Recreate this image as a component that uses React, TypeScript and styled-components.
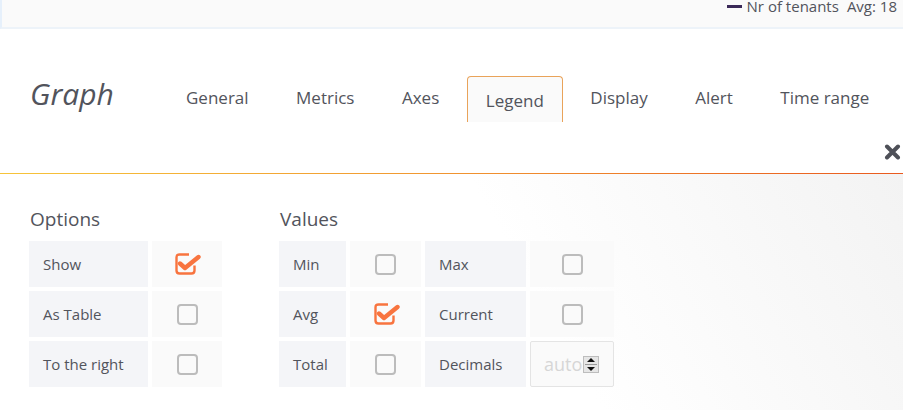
import React from "react";
import styled, { createGlobalStyle } from "styled-components";

const GlobalStyle = createGlobalStyle`
  html, body { margin: 0; padding: 0; background: #ffffff; }
  body { font-family: "Open Sans", "Noto Sans", sans-serif; color: #52545c; }
  * { box-sizing: border-box; }
`;

const Page = styled.div`
  width: 903px;
  height: 410px;
  overflow: hidden;
  display: flex;
  flex-direction: column;
`;

const PanelStrip = styled.div`
  height: 29px;
  flex: none;
  background: #fafafa;
  border-left: 2px solid #e6f0fb;
  border-bottom: 2px solid #edf3f9;
  display: flex;
  justify-content: flex-end;
  align-items: flex-start;
  padding-right: 6px;
`;

const LegendItem = styled.div`
  display: flex;
  align-items: center;
  font-size: 15px;
  line-height: 15px;
  margin-top: -1px;
  color: #52545c;
`;

const Swatch = styled.span`
  width: 15px;
  height: 3px;
  background: #3b2a58;
  display: inline-block;
  margin-right: 5px;
`;

const LegendValue = styled.span`
  margin-left: 8px;
`;

const Header = styled.div`
  flex: none;
  display: flex;
  flex-direction: column;
`;

const TitleRow = styled.div`
  display: flex;
  align-items: flex-start;
  padding-top: 47px;
  padding-left: 30px;
`;

const Title = styled.h2`
  margin: 0;
  width: 136px;
  font-size: 30px;
  line-height: 36px;
  font-style: italic;
  font-weight: 400;
  color: #52545c;
`;

const Tabs = styled.ul`
  list-style: none;
  margin: 0;
  padding: 0;
  display: flex;
  gap: 7.5px;
`;

const Tab = styled.li<{ $active?: boolean }>`
  height: 46px;
  padding: ${(p) => (p.$active ? "12px 18px 0 18px" : "9px 19px 0 19px")};
  font-size: 17px;
  line-height: 24px;
  color: #52545c;
  border: 1px solid ${(p) => (p.$active ? "#e9a35a" : "transparent")};
  border-bottom: none;
  border-radius: 4px 4px 0 0;
  background: ${(p) => (p.$active ? "#fafafa" : "transparent")};
  white-space: nowrap;
`;

const CloseRow = styled.div`
  display: flex;
  justify-content: flex-end;
  padding: 22px 2px 13px 0;
`;

const CloseIcon = styled.svg`
  width: 17px;
  height: 16px;
  display: block;
`;

const Rule = styled.div`
  flex: none;
  height: 1px;
  background: linear-gradient(to right, #f6c43a 0%, #f19a32 45%, #e95a1f 100%);
`;

const Body = styled.div`
  flex: 1;
  display: flex;
  gap: 57px;
  padding: 33px 0 0 29px;
  background: linear-gradient(60deg, #ffffff 58%, #f3f3f3 100%);
`;

const Section = styled.section`
  display: flex;
  flex-direction: column;
`;

const Heading = styled.h5`
  margin: 0 0 10px 1px;
  font-size: 19px;
  line-height: 24px;
  font-weight: 400;
  color: #52545c;
`;

const Grid = styled.div<{ $cols: string }>`
  display: grid;
  grid-template-columns: ${(p) => p.$cols};
  grid-auto-rows: 46px;
  column-gap: 4px;
  row-gap: 4px;
`;

const Label = styled.div`
  background: #f4f5f8;
  display: flex;
  align-items: center;
  padding-left: 14px;
  font-size: 15px;
  color: #52545c;
  white-space: nowrap;
`;

const CheckCell = styled.div`
  background: #fafafa;
  display: flex;
  align-items: center;
  justify-content: center;
`;

const EmptyBox = styled.span`
  width: 21px;
  height: 21px;
  border: 2px solid #bcbcbc;
  border-radius: 4px;
  display: block;
`;

const CheckedIcon = styled.svg`
  width: 26px;
  height: 23px;
  display: block;
  margin-left: 2px;
  margin-bottom: 2px;
`;

const InputCell = styled.div`
  position: relative;
  background: #fafafa;
  border: 1px solid #e4e4e4;
  border-radius: 2px;
  display: flex;
  align-items: center;
  overflow: hidden;
`;

const NumberInput = styled.input`
  width: 100%;
  height: 100%;
  border: none;
  background: transparent;
  padding: 0 0 0 13px;
  font-family: "Open Sans", sans-serif;
  font-size: 18px;
  color: #52545c;
  outline: none;
  &::placeholder { color: #d6d6d6; }
  &::-webkit-inner-spin-button, &::-webkit-outer-spin-button { -webkit-appearance: none; margin: 0; }
`;

const Spinner = styled.div`
  position: absolute;
  left: 52px;
  top: 14px;
  width: 16px;
  height: 17px;
  background: #e6e6e6;
  border: 1px solid #bdbdbd;
  display: flex;
  flex-direction: column;
  align-items: center;
  justify-content: space-around;
`;

const SpinDivider = styled.span`
  width: 12px;
  height: 1px;
  background: #9a9a9a;
`;

const Arrow = styled.span<{ $down?: boolean }>`
  width: 0;
  height: 0;
  border-left: 4px solid transparent;
  border-right: 4px solid transparent;
  ${(p) => (p.$down ? "border-top: 4px solid #111;" : "border-bottom: 4px solid #111;")}
`;

const Checked = () => (
  <CheckedIcon viewBox="0 0 26 23">
    <path
      d="M14 2.5 H4.5 Q1.5 2.5 1.5 5.5 V18.5 Q1.5 21.5 4.5 21.5 H16.5 Q19.5 21.5 19.5 18.5 V13.5"
      fill="none"
      stroke="#f8743f"
      strokeWidth="2.4"
    />
    <path
      d="M5 11.5 L10 16 L23.5 5"
      fill="none"
      stroke="#f8743f"
      strokeWidth="4.4"
      strokeLinecap="round"
      strokeLinejoin="round"
    />
  </CheckedIcon>
);

const Check = ({ on }: { on?: boolean }) => (
  <CheckCell>{on ? <Checked /> : <EmptyBox />}</CheckCell>
);

const tabs = ["General", "Metrics", "Axes", "Legend", "Display", "Alert", "Time range"];

export default function App() {
  return (
    <Page>
      <GlobalStyle />
      <PanelStrip>
        <LegendItem>
          <Swatch />
          <span>Nr of tenants</span>
          <LegendValue>Avg: 18</LegendValue>
        </LegendItem>
      </PanelStrip>
      <Header>
        <TitleRow>
          <Title>Graph</Title>
          <Tabs>
            {tabs.map((t) => (
              <Tab key={t} $active={t === "Legend"}>
                {t}
              </Tab>
            ))}
          </Tabs>
        </TitleRow>
        <CloseRow>
          <CloseIcon viewBox="0 0 17 16">
            <path
              d="M3 2.5 L14 13.5 M14 2.5 L3 13.5"
              stroke="#4e5058"
              strokeWidth="4"
              strokeLinecap="round"
            />
          </CloseIcon>
        </CloseRow>
      </Header>
      <Rule />
      <Body>
        <Section>
          <Heading>Options</Heading>
          <Grid $cols="119px 70px">
            <Label>Show</Label>
            <Check on />
            <Label>As Table</Label>
            <Check />
            <Label>To the right</Label>
            <Check />
          </Grid>
        </Section>
        <Section>
          <Heading>Values</Heading>
          <Grid $cols="67px 71px 101px 84px">
            <Label>Min</Label>
            <Check />
            <Label>Max</Label>
            <Check />
            <Label>Avg</Label>
            <Check on />
            <Label>Current</Label>
            <Check />
            <Label>Total</Label>
            <Check />
            <Label>Decimals</Label>
            <InputCell>
              <NumberInput type="number" placeholder="auto" />
              <Spinner>
                <Arrow />
                <SpinDivider />
                <Arrow $down />
              </Spinner>
            </InputCell>
          </Grid>
        </Section>
      </Body>
    </Page>
  );
}
